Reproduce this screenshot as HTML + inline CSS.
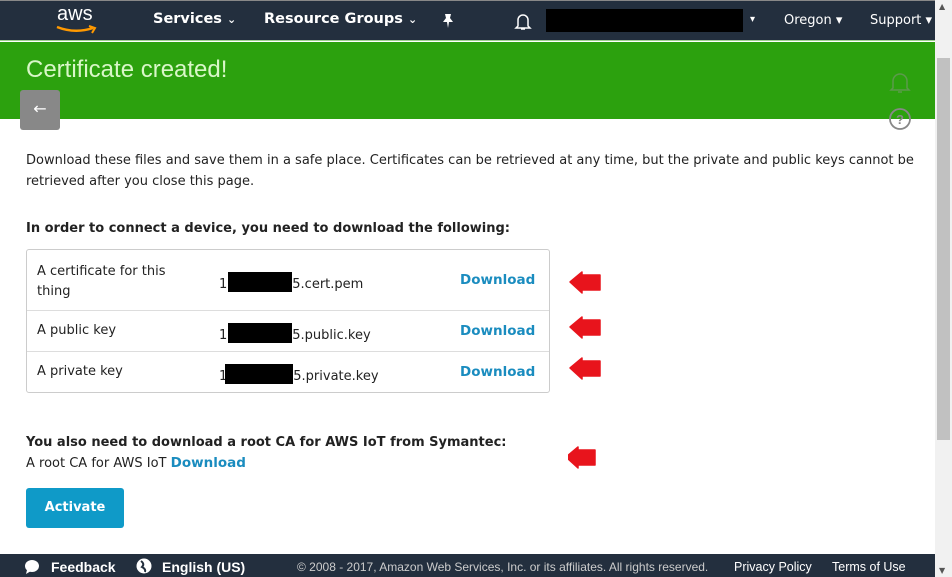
<!DOCTYPE html>
<html><head><style>
*{margin:0;padding:0;box-sizing:border-box}
body{width:952px;height:577px;overflow:hidden;position:relative;background:#fff;font-family:"DejaVu Sans","Liberation Sans",sans-serif;color:#222}
.abs{position:absolute}
.nav{left:0;top:0;width:935px;height:41px;background:#232f3e;border-top:1px solid #888;border-bottom:1px solid #9fd08f}
.nav span{position:absolute;color:#fff;font-weight:bold;font-size:14.5px;top:10px}
.green{left:0;top:42px;width:935px;height:77px;background:#2ca10e}
.sb{left:935px;top:0;width:17px;height:577px;background:#f1f1f1}
.thumb{left:937px;top:58px;width:13px;height:382px;background:#c1c1c1}
.t{font-size:13px;color:#222}
.dl{color:#1a8cbf;font-weight:bold;font-size:13.5px}
.blk{background:#000}
.bx{display:inline-block;height:20px;background:#000;vertical-align:-4px}
.foot{left:0;top:554px;width:935px;height:23px;background:#232f3e;color:#fff;font-size:12.5px}
.foot span{position:absolute;top:6px;font-family:"Liberation Sans Narrow","Liberation Sans",sans-serif}
</style></head><body>
<div class="abs nav">
<div class="abs" style="left:57px;top:2px;color:#fff;font-size:20px;font-family:'Liberation Sans',sans-serif">aws</div>
<svg class="abs" style="left:55px;top:24px" width="44" height="10"><path d="M2 2 Q20 9 38 3" stroke="#f90" stroke-width="2.5" fill="none"/><path d="M34 1 L40 3 L37 8" stroke="#f90" stroke-width="2" fill="none"/></svg>
<span style="left:153px">Services <small style="font-size:11px">⌄</small></span>
<span style="left:264px">Resource Groups <small style="font-size:11px">⌄</small></span>
<svg class="abs" style="left:441px;top:12px" width="14" height="16"><path d="M4 1 H10 L9 5 L12 9 H8 L7 15 L6 9 H2 L5 5 Z" fill="#fff"/></svg>
<svg class="abs" style="left:514px;top:11px" width="18" height="20"><path d="M4 14 V8 a5 5 0 0 1 10 0 V14 L16 16 H2 Z M7 17 h4" stroke="#fff" stroke-width="1.5" fill="none"/></svg>
<div class="abs blk" style="left:546px;top:8px;width:197px;height:23px"></div>
<span style="left:750px;font-size:10px;top:13px">▾</span>
<span style="left:784px;font-weight:normal;font-size:13px;top:12px">Oregon ▾</span>
<span style="left:870px;font-weight:normal;font-size:13px;top:12px">Support ▾</span>
</div>
<div class="abs green"></div>
<div class="abs" style="left:26px;top:56px;color:#d9f7c8;font-size:24px;font-family:'Liberation Sans',sans-serif">Certificate created!</div>
<div class="abs" style="left:20px;top:90px;width:40px;height:40px;background:#888;border-radius:3px;color:#fff;font-size:16px;text-align:center;line-height:38px">←</div>
<svg class="abs" style="left:888px;top:70px" width="24" height="62"><path d="M5 18 V11 a7 7 0 0 1 14 0 V18 L21 20 H3 Z M10 22 h4" stroke="#5c9a4c" stroke-width="1.5" fill="none"/><circle cx="12" cy="49" r="10" stroke="#888" stroke-width="1.8" fill="none"/><text x="12" y="54" text-anchor="middle" font-size="13" font-weight="bold" fill="#888" font-family="Liberation Sans">?</text></svg>
<div class="abs t" style="left:26px;top:150px;width:890px;line-height:21px">Download these files and save them in a safe place. Certificates can be retrieved at any time, but the private and public keys cannot be retrieved after you close this page.</div>
<div class="abs t" style="left:26px;top:221px;font-weight:bold">In order to connect a device, you need to download the following:</div>
<div class="abs" style="left:26px;top:249px;width:524px;height:144px;border:1px solid #ccc;border-radius:3px"></div>
<div class="abs" style="left:27px;top:310px;width:522px;height:1px;background:#ddd"></div>
<div class="abs" style="left:27px;top:351px;width:522px;height:1px;background:#ddd"></div>
<div class="abs t" style="left:37px;top:262px;line-height:20px">A certificate for this<br>thing</div>
<div class="abs t" style="left:37px;top:323px">A public key</div>
<div class="abs t" style="left:37px;top:364px">A private key</div>
<div class="abs t" style="left:219px;top:272px">1<span class="bx" style="width:64px;margin-left:1px"></span>5.cert.pem</div>
<div class="abs t" style="left:219px;top:323px">1<span class="bx" style="width:64px;margin-left:1px"></span>5.public.key</div>
<div class="abs t" style="left:219px;top:364px">1<span class="bx" style="width:68px;margin-left:-2px"></span>5.private.key</div>
<div class="abs dl" style="left:460px;top:272px">Download</div>
<div class="abs dl" style="left:460px;top:323px">Download</div>
<div class="abs dl" style="left:460px;top:364px">Download</div>
<svg class="abs" style="left:568px;top:270px" width="36" height="200">
<g fill="#e8141c" stroke="#e8141c" stroke-width="1.5" stroke-linejoin="round"><path d="M2 12 L14 2 V5 H32 V20 H14 V23 Z"/><path d="M2 57 L14 47 V50 H32 V65 H14 V68 Z"/><path d="M2 98 L14 88 V91 H32 V106 H14 V109 Z"/><path d="M-2 187 L10 177 V180 H27 V195 H10 V198 Z"/></g></svg>
<div class="abs t" style="left:26px;top:435px;font-weight:bold">You also need to download a root CA for AWS IoT from Symantec:</div>
<div class="abs t" style="left:26px;top:455px">A root CA for AWS IoT <span class="dl">Download</span></div>
<div class="abs" style="left:26px;top:488px;width:98px;height:40px;background:#0f9ac8;border-radius:3px;color:#fff;font-weight:bold;font-size:13px;text-align:center;line-height:40px">Activate</div>
<div class="abs foot">
<svg class="abs" style="left:24px;top:5px" width="16" height="16"><ellipse cx="8" cy="7" rx="7" ry="6" fill="#fff"/><path d="M3 11 L2 15 L7 12Z" fill="#fff"/></svg>
<span style="left:51px;font-weight:bold;font-size:14px;top:5px">Feedback</span>
<svg class="abs" style="left:136px;top:4px" width="16" height="16"><circle cx="8" cy="8" r="7.5" fill="#fff"/><path d="M5 3 Q9 6 6 9 Q10 11 9 14" stroke="#232f3e" stroke-width="2" fill="none"/></svg>
<span style="left:162px;font-weight:bold;font-size:14px;top:5px">English (US)</span>
<span style="left:297px;color:#ccc;font-size:12px">© 2008 - 2017, Amazon Web Services, Inc. or its affiliates. All rights reserved.</span>
<span style="left:734px">Privacy Policy</span>
<span style="left:832px">Terms of Use</span>
</div>
<div class="abs sb"></div>
<div class="abs thumb"></div>
<div class="abs" style="left:939px;top:2px;font-size:8px;color:#555">▲</div>
<div class="abs" style="left:939px;top:566px;font-size:8px;color:#555">▼</div>
</body></html>
